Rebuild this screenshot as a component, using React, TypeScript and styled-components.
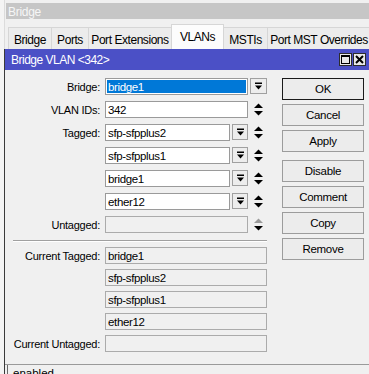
import styled, { createGlobalStyle } from 'styled-components';

const GlobalStyle = createGlobalStyle`
  body {
    margin: 0;
    background: #f0f0f0;
    font-family: 'Liberation Sans', Arial, sans-serif;
    overflow: hidden;
  }
`;

const Screen = styled.div`
  width: 369px;
  height: 374px;
  display: flex;
  overflow: hidden;
  background: #f0f0f0;
`;

const SideStrip = styled.div`
  width: 5px;
  flex: none;
  background: #f4f4f4;
  border-right: 1px solid #dcdcdc;
  box-sizing: border-box;
`;

const Window = styled.div`
  flex: 1;
  display: flex;
  flex-direction: column;
  min-width: 0;
  min-height: 0;
`;

const TitleBar = styled.div`
  flex: none;
  margin: 3px 0 0 1px;
  height: 16px;
  background: #c6c6c6;
  color: #f6f6f6;
  font-size: 12px;
  letter-spacing: -0.3px;
  line-height: 18px;
  padding-left: 2px;
`;

const TabStrip = styled.div`
  flex: none;
  height: 30px;
  display: flex;
  align-items: flex-end;
  padding-left: 4px;
  background: #f0f0f0;
`;

const Tab = styled.div<{ $w: number; $active?: boolean }>`
  width: ${(p) => p.$w}px;
  height: ${(p) => (p.$active ? 25 : 22)}px;
  flex: none;
  box-sizing: border-box;
  border: 1px solid #d6d6d6;
  border-bottom: none;
  margin-left: -1px;
  background: ${(p) => (p.$active ? '#fcfcfc' : '#ececec')};
  font-size: 12px;
  letter-spacing: -0.45px;
  color: #000;
  display: flex;
  align-items: center;
  justify-content: center;
  white-space: nowrap;
  overflow: hidden;
  padding-top: ${(p) => (p.$active ? 0 : 2)}px;
`;

const Dialog = styled.div`
  flex: none;
  display: flex;
  flex-direction: column;
  border-left: 1px solid #3a3a3a;
  margin-left: -1px;
  background: #f0f0f0;
`;

const DialogTitle = styled.div`
  height: 21px;
  background: #4b50c6;
  color: #fff;
  font-size: 12px;
  letter-spacing: -0.5px;
  display: flex;
  align-items: center;
  padding: 0 3px 0 6px;
`;

const TitleText = styled.span`
  flex: 1;
`;

const WinButton = styled.div`
  width: 13px;
  height: 13px;
  margin-left: 1px;
  box-sizing: border-box;
  border: 1px solid #2c2c2c;
  background: #e8e8e8;
  display: flex;
  align-items: center;
  justify-content: center;
`;

const DialogBody = styled.div`
  height: 294px;
  display: flex;
  padding-top: 8px;
  box-sizing: border-box;
`;

const Form = styled.div`
  display: flex;
  flex-direction: column;
`;

const Group = styled.div<{ $gap: number }>`
  display: flex;
  flex-direction: column;
  gap: ${(p) => p.$gap}px;
`;

const Row = styled.div`
  display: grid;
  grid-template-columns: 96px 162px;
  column-gap: 4px;
  align-items: center;
  height: 17px;
`;

const Label = styled.div`
  text-align: right;
  font-size: 11px;
  letter-spacing: -0.25px;
  color: #000;
  white-space: nowrap;
  padding-right: 1px;
`;

const FieldWrap = styled.div`
  display: flex;
  gap: 2px;
  height: 17px;
`;

type FieldKind = 'edit' | 'selected' | 'readonly' | 'disabled';

const Field = styled.div<{ $kind: FieldKind }>`
  flex: 1;
  min-width: 0;
  box-sizing: border-box;
  height: 17px;
  border: 1px solid ${(p) => (p.$kind === 'edit' || p.$kind === 'selected' ? '#9a9a9a' : '#ababab')};
  background: ${(p) =>
    p.$kind === 'selected' ? '#0078d7' : p.$kind === 'edit' ? '#fff' : '#f0f0f0'};
  box-shadow: ${(p) => (p.$kind === 'selected' ? 'inset 0 0 0 1px #fff' : 'none')};
  color: ${(p) => (p.$kind === 'selected' ? '#fff' : '#000')};
  font-size: 11.5px;
  letter-spacing: -0.35px;
  line-height: 16px;
  padding: 0 2px;
  white-space: nowrap;
  overflow: hidden;
`;

const DropButton = styled.div<{ $w: number }>`
  width: ${(p) => p.$w}px;
  flex: none;
  height: 16px;
  box-sizing: border-box;
  border: 1px solid #a0a0a0;
  background: #ededed;
  display: flex;
  align-items: center;
  justify-content: center;
`;

const SpinSlot = styled.div`
  width: 17px;
  flex: none;
  display: flex;
  align-items: center;
  justify-content: center;
`;

const Separator = styled.div`
  margin: 7px 0 5px 8px;
  width: 254px;
  height: 1px;
  background: #a0a0a0;
  border-bottom: 1px solid #fff;
`;

const Buttons = styled.div`
  width: 82px;
  margin-left: 15px;
  display: flex;
  flex-direction: column;
  gap: 4px;
`;

const Button = styled.div<{ $default?: boolean; $spaced?: boolean }>`
  height: 22px;
  box-sizing: border-box;
  border: 1px solid ${(p) => (p.$default ? '#1a1a1a' : '#9c9c9c')};
  background: #ececec;
  font-size: 11.5px;
  letter-spacing: -0.3px;
  color: #000;
  display: flex;
  align-items: center;
  justify-content: center;
  margin-top: ${(p) => (p.$spaced ? 4 : 0)}px;
`;

const StatusBar = styled.div`
  border-top: 1px solid #9a9a9a;
  padding-left: 2px;
  height: 24px;
`;

const StatusBox = styled.div`
  border-left: 1px solid #6a6a6a;
  height: 100%;
  font-size: 11.5px;
  padding: 2px 0 0 5px;
  box-sizing: border-box;
`;

const DropIcon = () => (
  <svg width="9" height="9" viewBox="0 0 9 9">
    <rect x="1" y="0.5" width="7" height="1.5" fill="#000" />
    <polygon points="1,3.5 8,3.5 4.5,7.5" fill="#000" />
  </svg>
);

const SpinIcon = ({ dimUp }: { dimUp?: boolean }) => (
  <svg width="9" height="13" viewBox="0 0 9 13">
    <polygon points="4.5,0.5 9,5 0,5" fill={dimUp ? '#9a9a9a' : '#000'} />
    <polygon points="0,8 9,8 4.5,12.5" fill="#000" />
  </svg>
);

const tabs = [
  { name: 'Bridge', w: 44 },
  { name: 'Ports', w: 38 },
  { name: 'Port Extensions', w: 84 },
  { name: 'VLANs', w: 53, active: true },
  { name: 'MSTIs', w: 45 },
  { name: 'Port MST Overrides', w: 104 },
];

const tagged = ['sfp-sfpplus2', 'sfp-sfpplus1', 'bridge1', 'ether12'];
const current = ['bridge1', 'sfp-sfpplus2', 'sfp-sfpplus1', 'ether12'];

export default function App() {
  return (
    <Screen>
      <GlobalStyle />
      <SideStrip />
      <Window>
        <TitleBar>Bridge</TitleBar>
        <TabStrip>
          {tabs.map((t) => (
            <Tab key={t.name} $w={t.w} $active={t.active}>
              {t.name}
            </Tab>
          ))}
        </TabStrip>
        <Dialog>
          <DialogTitle>
            <TitleText>Bridge VLAN &lt;342&gt;</TitleText>
            <WinButton>
              <svg width="9" height="9" viewBox="0 0 9 9">
                <rect x="0.5" y="0.5" width="8" height="8" fill="none" stroke="#000" />
                <rect x="0" y="0" width="9" height="2" fill="#000" />
              </svg>
            </WinButton>
            <WinButton>
              <svg width="9" height="9" viewBox="0 0 9 9">
                <path d="M1 1 L8 8 M8 1 L1 8" stroke="#000" strokeWidth="2" />
              </svg>
            </WinButton>
          </DialogTitle>
          <DialogBody>
            <Form>
              <Group $gap={6}>
                <Row>
                  <Label>Bridge:</Label>
                  <FieldWrap>
                    <Field $kind="selected">bridge1</Field>
                    <DropButton $w={17}>
                      <DropIcon />
                    </DropButton>
                  </FieldWrap>
                </Row>
                <Row>
                  <Label>VLAN IDs:</Label>
                  <FieldWrap>
                    <Field $kind="edit">342</Field>
                    <SpinSlot>
                      <SpinIcon />
                    </SpinSlot>
                  </FieldWrap>
                </Row>
                {tagged.map((v, i) => (
                  <Row key={v}>
                    <Label>{i === 0 ? 'Tagged:' : ''}</Label>
                    <FieldWrap>
                      <Field $kind="edit">{v}</Field>
                      <DropButton $w={16}>
                        <DropIcon />
                      </DropButton>
                      <SpinSlot>
                        <SpinIcon />
                      </SpinSlot>
                    </FieldWrap>
                  </Row>
                ))}
                <Row>
                  <Label>Untagged:</Label>
                  <FieldWrap>
                    <Field $kind="disabled" />
                    <SpinSlot>
                      <SpinIcon dimUp />
                    </SpinSlot>
                  </FieldWrap>
                </Row>
              </Group>
              <Separator />
              <Group $gap={5}>
                {current.map((v, i) => (
                  <Row key={v}>
                    <Label>{i === 0 ? 'Current Tagged:' : ''}</Label>
                    <FieldWrap>
                      <Field $kind="readonly">{v}</Field>
                    </FieldWrap>
                  </Row>
                ))}
                <Row>
                  <Label>Current Untagged:</Label>
                  <FieldWrap>
                    <Field $kind="readonly" />
                  </FieldWrap>
                </Row>
              </Group>
            </Form>
            <Buttons>
              <Button $default>OK</Button>
              <Button>Cancel</Button>
              <Button>Apply</Button>
              <Button $spaced>Disable</Button>
              <Button>Comment</Button>
              <Button>Copy</Button>
              <Button>Remove</Button>
            </Buttons>
          </DialogBody>
          <StatusBar>
            <StatusBox>enabled</StatusBox>
          </StatusBar>
        </Dialog>
      </Window>
    </Screen>
  );
}
